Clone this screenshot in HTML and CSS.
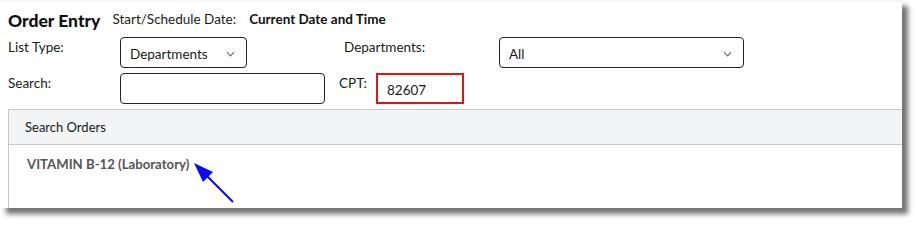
FILE: index.html
```html
<!DOCTYPE html>
<html>
<head>
<meta charset="utf-8">
<link rel="stylesheet" href="styles.css">
</head>
<body>
<div class="page">
<div class="shot">
  <div class="title-row">
    <h1 class="title">Order Entry</h1>
    <span class="date-label">Start/Schedule Date:</span>
    <span class="date-value">Current Date and Time</span>
  </div>
  <div class="form-row row-list">
    <label class="lbl lbl-main">List Type:</label>
    <div class="select sel-type"><span>Departments</span><svg class="chev" viewBox="0 0 10 6" width="9" height="6"><path d="M1 1 L5 5 L9 1" fill="none" stroke="#6b6f76" stroke-width="1.3"/></svg></div>
    <label class="lbl lbl-dept">Departments:</label>
    <div class="select sel-dept"><span>All</span><svg class="chev" viewBox="0 0 10 6" width="9" height="6"><path d="M1 1 L5 5 L9 1" fill="none" stroke="#6b6f76" stroke-width="1.3"/></svg></div>
  </div>
  <div class="form-row row-search">
    <label class="lbl lbl-main">Search:</label>
    <div class="input inp-search"></div>
    <label class="lbl lbl-cpt">CPT:</label>
    <div class="input inp-cpt">82607</div>
  </div>
  <div class="panel">
    <div class="panel-head">Search Orders</div>
    <div class="panel-body">
      <div class="result">VITAMIN B-12 (Laboratory)</div>
    </div>
  </div>
  <svg class="arrow" width="60" height="60" viewBox="0 0 60 60">
    <line x1="53" y1="54" x2="22" y2="23" stroke="#0a0af0" stroke-width="2"/>
    <polygon points="14,15 33,24 23,34" fill="#0a0af0"/>
  </svg>
</div>
</div>
</body>
</html>
```
FILE: styles.css
```css
* { box-sizing: border-box; }
html, body {
  margin: 0;
  background: #ffffff;
}
body {
  font-family: Lato, "Noto Sans", sans-serif;
  color: #1a1a1a;
}
.page {
  width: 916px;
  height: 222px;
  padding: 0;
}
.shot {
  position: relative;
  width: 902px;
  height: 208px;
  background: #ffffff;
  border-top: 2px solid #f6f6f6;
  box-shadow: 6px 6px 5px rgba(0,0,0,0.55);
}
.title-row {
  display: flex;
  align-items: flex-start;
  padding: 7px 0 0 8px;
  height: 35px;
}
.title {
  margin: 0;
  font-size: 17.5px;
  font-weight: 900;
  line-height: 23px;
  color: #111;
}
.date-label {
  margin-left: 12px;
  padding-top: 1px;
  font-size: 13.5px;
  line-height: 18px;
  color: #1a1a1a;
}
.date-value {
  margin-left: 13px;
  padding-top: 1px;
  font-size: 13.5px;
  line-height: 18px;
  font-weight: 700;
  color: #111;
}
.form-row {
  display: flex;
  align-items: flex-start;
  padding-left: 8px;
  height: 31px;
}
.row-search { margin-top: 5px; }
.lbl {
  font-size: 13.5px;
  line-height: 18px;
  padding-top: 1px;
  color: #1a1a1a;
}
.lbl-main { width: 112px; }
.lbl-dept { margin-left: 97px; width: 155px; }
.lbl-cpt { margin-left: 14px; width: 37px; }
.select, .input {
  height: 31px;
  border: 1px solid #1d2330;
  border-radius: 4px;
  font-size: 13.5px;
  display: flex;
  align-items: center;
  padding: 2px 9px 0 9px;
  color: #1a1a1a;
}
.select { justify-content: space-between; }
.sel-type { width: 127px; }
.sel-dept { width: 245px; }
.chev { margin-right: 2px; }
.inp-search { width: 205px; }
.inp-cpt {
  width: 88px;
  border: 2px solid #e11313;
  border-radius: 0;
  padding-left: 9px;
  padding-top: 3px;
}
.panel {
  margin: 5px 0 0 8px;
  border-left: 1px solid #c9c9c9;
  border-top: 1px solid #c9c9c9;
  height: 99px;
}
.panel-head {
  height: 35px;
  background: #f3f4f6;
  border-bottom: 1px solid #c9c9c9;
  font-size: 13px;
  line-height: 34px;
  padding-left: 16px;
  color: #1a1a1a;
}
.panel-body {
  padding: 10px 0 0 18px;
}
.result {
  font-size: 13.2px;
  font-weight: 700;
  color: #555;
  line-height: 18px;
}
.arrow {
  position: absolute;
  left: 180px;
  top: 146px;
}
```
